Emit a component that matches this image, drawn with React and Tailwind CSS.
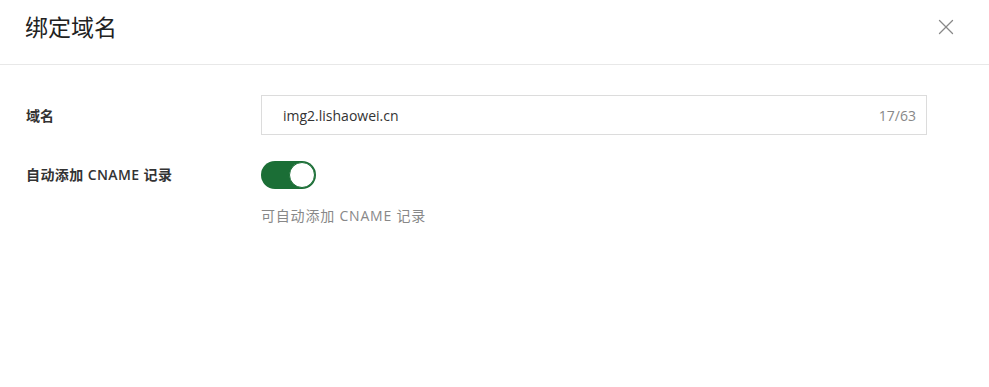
import { X } from "lucide-react";

const FONT = { fontFamily: '"Open Sans", "Noto Sans CJK SC", sans-serif' };

export default function App() {
  return (
    <div className="w-[989px] h-[387px] bg-white text-[#333]" style={FONT}>
      {/* header */}
      <div className="h-[65px] flex items-center justify-between pl-[25px] pr-[30px] border-b border-[#e8e8e8]">
        <h2 className="text-[23px] text-[#222] leading-none -mt-[10px]">绑定域名</h2>
        <button className="text-[#888] -mt-[10px]">
          <X size={26} strokeWidth={1.2} />
        </button>
      </div>

      {/* form */}
      <div className="pt-[30px] pl-[26px] pr-[62px] flex flex-col gap-[26px]">
        <div className="flex items-center">
          <label className="w-[235px] text-[14px] font-semibold text-[#333]">域名</label>
          <div className="flex-1 h-[40px] border border-[#dcdcdc] flex items-center justify-between pl-[21px] pr-[10px]">
            <span className="text-[14px] text-[#333]">img2.lishaowei.cn</span>
            <span className="text-[14px] text-[#888]">17/63</span>
          </div>
        </div>

        <div className="flex items-start">
          <label className="w-[235px] text-[14px] font-semibold text-[#333] mt-[3px] tracking-[0.4px]">自动添加 CNAME 记录</label>
          <div className="flex flex-col gap-[16px]">
            <div className="w-[55px] h-[28px] rounded-full bg-[#1b6e36] flex items-center justify-end pr-[1px]">
              <div className="w-[26px] h-[26px] rounded-full bg-white border border-[#1b6e36]" />
            </div>
            <p className="text-[14px] text-[#888] tracking-[0.8px]">可自动添加 CNAME 记录</p>
          </div>
        </div>
      </div>
    </div>
  );
}
